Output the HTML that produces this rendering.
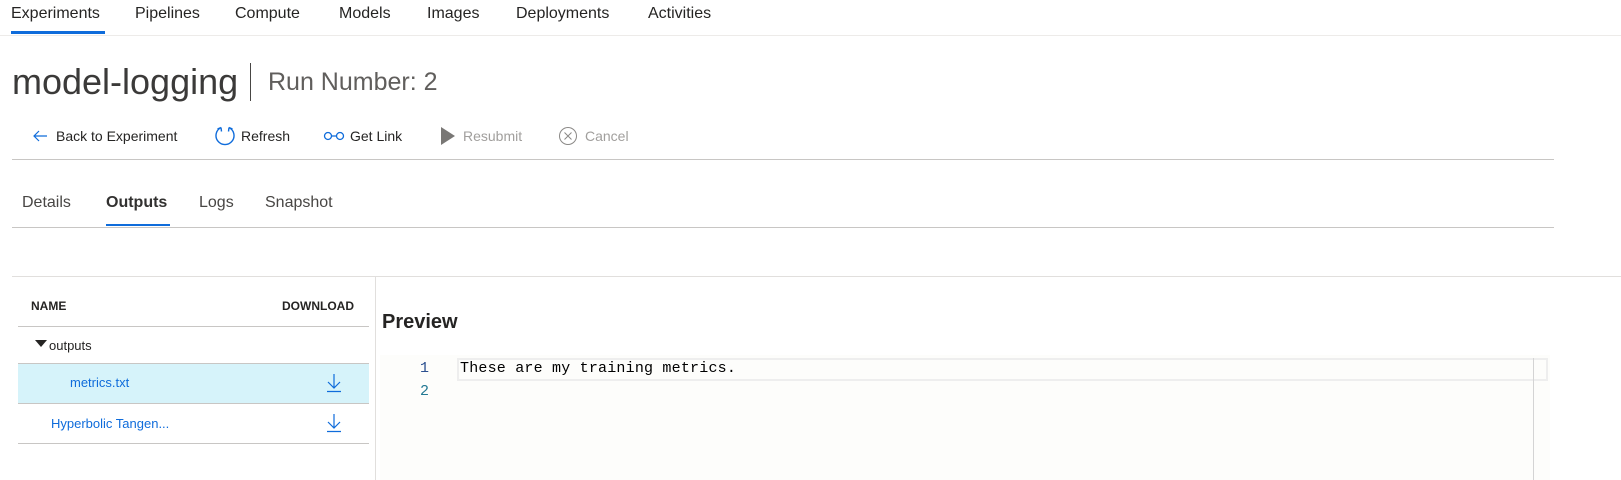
<!DOCTYPE html>
<html><head><meta charset="utf-8"><style>
*{margin:0;padding:0;box-sizing:border-box}
body{width:1621px;height:480px;overflow:hidden;background:#fff;font-family:"Liberation Sans",sans-serif;color:#252423;position:relative}
.a{position:absolute;white-space:nowrap}
.hl{position:absolute;height:1px;background:#c8c6c4}
</style></head><body>
<!-- top nav -->
<div class="a" style="left:11px;top:5px;font-size:16px">Experiments</div>
<div class="a" style="left:135px;top:5px;font-size:16px">Pipelines</div>
<div class="a" style="left:235px;top:5px;font-size:16px">Compute</div>
<div class="a" style="left:339px;top:5px;font-size:16px">Models</div>
<div class="a" style="left:427px;top:5px;font-size:16px">Images</div>
<div class="a" style="left:516px;top:5px;font-size:16px">Deployments</div>
<div class="a" style="left:648px;top:5px;font-size:16px">Activities</div>
<div class="a" style="left:11px;top:31px;width:94px;height:3px;background:#0f6cdb"></div>
<div class="hl" style="left:0;top:35px;width:1621px;background:#edebe9"></div>
<!-- title -->
<div class="a" style="left:12px;top:61px;font-size:36px;font-weight:300;color:#3b3a39">model-logging</div>
<div class="a" style="left:250px;top:63px;width:1px;height:38px;background:#484644"></div>
<div class="a" style="left:268px;top:68px;font-size:25px;color:#605e5c">Run Number: 2</div>
<!-- toolbar -->
<svg class="a" style="left:32px;top:128px" width="16" height="16" viewBox="0 0 16 16"><path d="M15 8H2M7 3L2 8l5 5" fill="none" stroke="#0f6cdb" stroke-width="1.2"/></svg>
<div class="a" style="left:56px;top:128px;font-size:14px">Back to Experiment</div>
<svg class="a" style="left:214px;top:124px" width="22" height="24" viewBox="0 0 22 24"><path d="M7 3.5A9 9 0 1 0 15 3.5M15 3.5l-0.5 4M15 3.5l3.5 1.5M7 3.5l0.5 4M7 3.5L3.5 5" fill="none" stroke="#0f6cdb" stroke-width="1.4"/></svg>
<div class="a" style="left:241px;top:128px;font-size:14px">Refresh</div>
<svg class="a" style="left:323px;top:131px" width="22" height="10" viewBox="0 0 22 10"><circle cx="5" cy="5" r="3.5" fill="none" stroke="#0f6cdb" stroke-width="1.3"/><circle cx="17" cy="5" r="3.5" fill="none" stroke="#0f6cdb" stroke-width="1.3"/><path d="M8.5 5h5" stroke="#0f6cdb" stroke-width="1.3"/></svg>
<div class="a" style="left:350px;top:128px;font-size:14px">Get Link</div>
<svg class="a" style="left:440px;top:126px" width="16" height="20" viewBox="0 0 16 20"><path d="M1 1L15 10L1 19Z" fill="#797775"/></svg>
<div class="a" style="left:463px;top:128px;font-size:14px;color:#a19f9d">Resubmit</div>
<svg class="a" style="left:558px;top:126px" width="20" height="20" viewBox="0 0 20 20"><circle cx="10" cy="10" r="8.5" fill="none" stroke="#8a8886" stroke-width="1"/><path d="M6.5 6.5l7 7M13.5 6.5l-7 7" stroke="#8a8886" stroke-width="1"/></svg>
<div class="a" style="left:585px;top:128px;font-size:14px;color:#a19f9d">Cancel</div>
<div class="hl" style="left:12px;top:159px;width:1542px"></div>
<!-- tabs -->
<div class="a" style="left:22px;top:194px;font-size:16px;color:#484644">Details</div>
<div class="a" style="left:106px;top:194px;font-size:16px;font-weight:bold;color:#323130">Outputs</div>
<div class="a" style="left:106px;top:224px;width:64px;height:2px;background:#0f6cdb"></div>
<div class="a" style="left:199px;top:194px;font-size:16px;color:#484644">Logs</div>
<div class="a" style="left:265px;top:194px;font-size:16px;color:#484644">Snapshot</div>
<div class="hl" style="left:12px;top:227px;width:1542px"></div>
<!-- panel -->
<div class="hl" style="left:12px;top:276px;width:1609px;background:#e1dfdd"></div>
<div class="a" style="left:375px;top:277px;width:1px;height:203px;background:#e1dfdd"></div>
<div class="a" style="left:31px;top:299px;font-size:12px;font-weight:bold">NAME</div>
<div class="a" style="left:282px;top:299px;font-size:12px;font-weight:bold">DOWNLOAD</div>
<div class="hl" style="left:18px;top:326px;width:351px"></div>
<svg class="a" style="left:35px;top:340px" width="12" height="8" viewBox="0 0 12 8"><path d="M0 0h12L6 7Z" fill="#252423"/></svg>
<div class="a" style="left:49px;top:338px;font-size:13px">outputs</div>
<div class="a" style="left:18px;top:363px;width:351px;height:41px;background:#d6f3fa;border-top:1px solid #c8c6c4;border-bottom:1px solid #c8c6c4"></div>
<div class="a" style="left:70px;top:375px;font-size:13px;color:#0f6cdb">metrics.txt</div>
<svg class="a" style="left:326px;top:373px" width="16" height="20" viewBox="0 0 16 20"><path d="M8 1v14M2 9l6 6 6-6M1 18.5h14" fill="none" stroke="#0f6cdb" stroke-width="1.2"/></svg>
<div class="a" style="left:51px;top:416px;font-size:13px;color:#0f6cdb">Hyperbolic Tangen...</div>
<svg class="a" style="left:326px;top:413px" width="16" height="20" viewBox="0 0 16 20"><path d="M8 1v14M2 9l6 6 6-6M1 18.5h14" fill="none" stroke="#0f6cdb" stroke-width="1.2"/></svg>
<div class="hl" style="left:18px;top:443px;width:351px"></div>
<!-- preview -->
<div class="a" style="left:382px;top:311px;font-size:20px;font-weight:bold;color:#252423">Preview</div>
<div class="a" style="left:380px;top:355px;width:1170px;height:125px;background:#fdfdfb"></div>
<div class="a" style="left:457px;top:358px;width:1091px;height:23px;border:2px solid #eeeeee"></div>
<div class="a" style="left:1533px;top:358px;width:1px;height:122px;background:#d4d4d4"></div>
<div class="a" style="left:420px;top:360px;font-size:15px;font-family:'Liberation Mono',monospace;color:#2b4f8f">1</div>
<div class="a" style="left:420px;top:383px;font-size:15px;font-family:'Liberation Mono',monospace;color:#237893">2</div>
<div class="a" style="left:460px;top:360px;font-size:15px;letter-spacing:0.2px;font-family:'Liberation Mono',monospace;color:#000">These are my training metrics.</div>
</body></html>
